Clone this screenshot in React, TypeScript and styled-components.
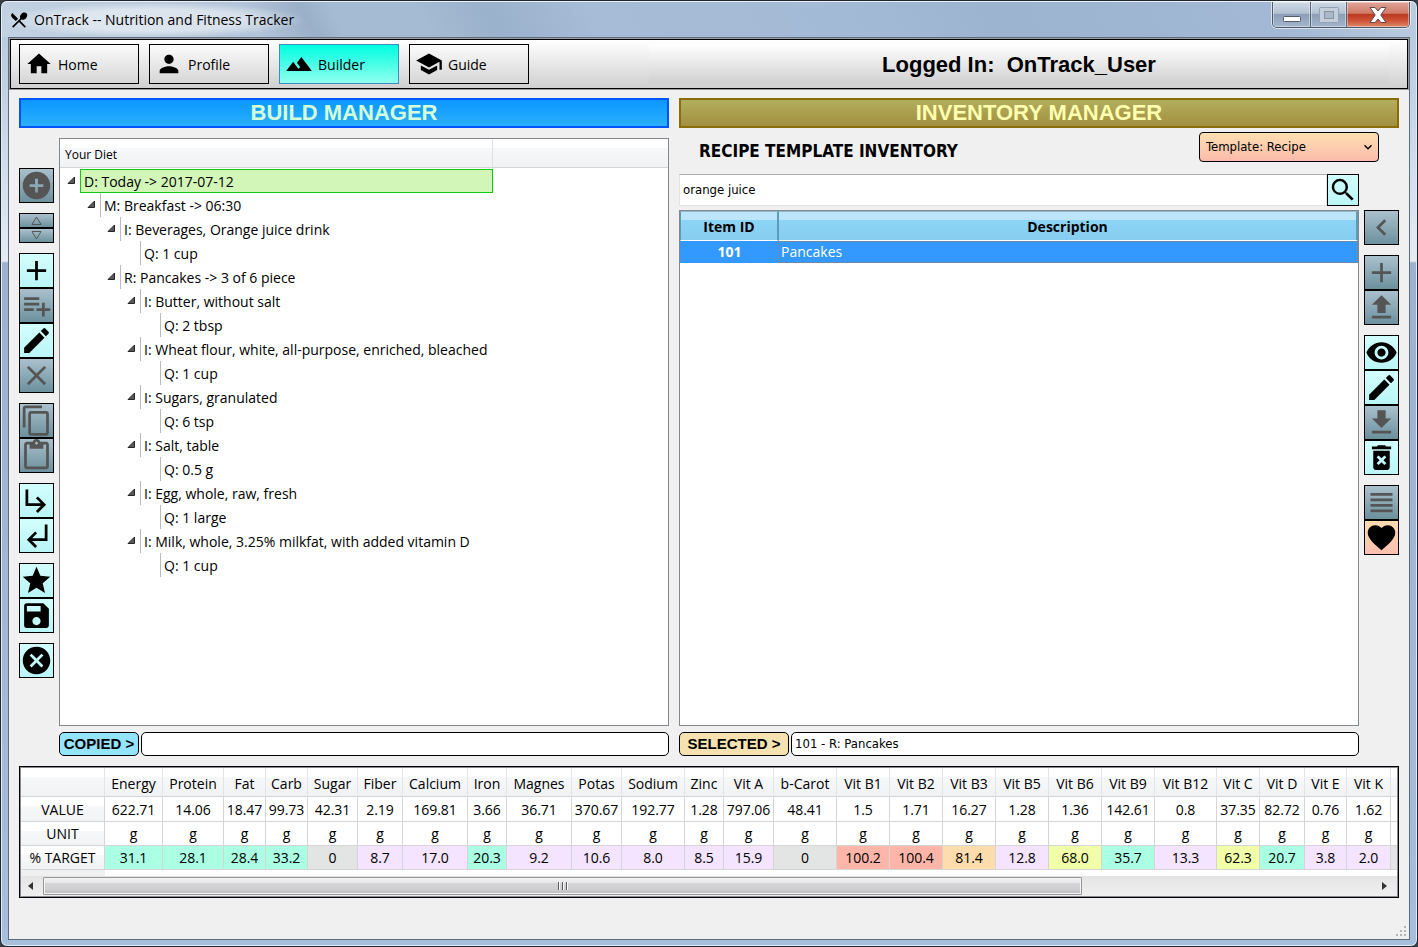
import React from "react";
import styled, { createGlobalStyle, css } from "styled-components";
import {
  MdAdd,
  MdAddCircle,
  MdCancel,
  MdChevronLeft,
  MdClose,
  MdContentCopy,
  MdContentPaste,
  MdDeleteForever,
  MdDownload,
  MdEdit,
  MdExpandMore,
  MdFavorite,
  MdHome,
  MdPerson,
  MdPlaylistAdd,
  MdRestaurantMenu,
  MdSave,
  MdSchool,
  MdSearch,
  MdStar,
  MdSubdirectoryArrowLeft,
  MdSubdirectoryArrowRight,
  MdTerrain,
  MdUpload,
  MdViewHeadline,
  MdVisibility,
} from "react-icons/md";

const uiFont = `"Open Sans", "Noto Sans", sans-serif`;
const formFont = `"DejaVu Sans Condensed", "DejaVu Sans", sans-serif`;
const headingFont = `"Liberation Sans", Arial, sans-serif`;

const GlobalStyle = createGlobalStyle`
  *, *::before, *::after { box-sizing: border-box; }
  body { margin: 0; background: #3a3f46; font: 14px/24px ${uiFont}; color: #000; }
  button, input, select { font: inherit; color: inherit; margin: 0; }
  svg { display: block; flex: none; }
`;

const Window = styled.div`
  min-height: 100vh;
  display: flex;
  flex-direction: column;
  padding: 0 7px 6px;
  border: 1px solid #20262e;
  border-radius: 7px;
  box-shadow: inset 0 0 0 1px #e4edf6;
  background: linear-gradient(#b4c7dc 0, #c3d3e5 100px, #e3ebf5 255px, #e3ebf5 260px, #9cb2cf 262px, #a4b9d5 700px, #a5bfdc 100%);
`;

const TitleBar = styled.header`
  display: flex;
  align-items: flex-start;
  justify-content: space-between;
  height: 36px;
  margin: 0 -6px;
  padding-right: 6px;
  border-radius: 6px 6px 0 0;
  border-top: 1px solid #e9f0f8;
  background: linear-gradient(62deg, #c2d2e2 0, #b3c5d9 18%, #9aafc8 22%, #a5bad3 24%, #a5bad3 30%, #9bb2cc 35%, #a7bcd6 42%, #a3bad6 60%, #9cb4d0 70%, #a2b8d4 90%, #bccde0 100%);
`;

const Title = styled.h1`
  display: flex;
  align-items: center;
  gap: 5px;
  height: 36px;
  margin: 0;
  padding: 0 12px 0 7px;
  font-size: 14px;
  font-weight: 400;
  background: radial-gradient(closest-side, rgba(255, 255, 255, 0.5) 60%, transparent);
`;

const Caption = styled.div`
  display: flex;
  height: 26px;
  border: 1px solid #4c5a6c;
  border-top: 0;
  border-radius: 0 0 5px 5px;
  box-shadow: 0 0 0 1px rgba(255, 255, 255, 0.6);
  overflow: hidden;
`;

const CaptionButton = styled.button<{ $kind?: "close"; $w: number }>`
  display: flex;
  align-items: center;
  justify-content: center;
  width: ${(p) => p.$w}px;
  padding: 0;
  border: 0;
  border-right: 1px solid #56657a;
  box-shadow: inset 0 0 0 1px rgba(255, 255, 255, 0.4);
  background: linear-gradient(#cfd9e5 0, #b3c1d2 45%, #8d9fb6 50%, #a3b6cd 100%);
  ${(p) =>
    p.$kind === "close" &&
    css`
      border-right: 0;
      background: linear-gradient(#e0a597 0, #d07a68 45%, #bb3a22 50%, #cf5238 75%, #dd8c6c 100%);
    `}
`;

const MinimizeButton = styled(CaptionButton)`
  align-items: flex-end;
  padding-bottom: 5px;
`;

const Client = styled.main`
  flex: 1;
  display: flex;
  flex-direction: column;
  border: 1px solid #5d6c7e;
  background: #f0f0f0;
`;

const ToolBar = styled.nav`
  display: flex;
  align-items: center;
  gap: 10px;
  height: 50px;
  margin: 1px 1px 0;
  padding: 0 8px;
  border: 1px solid #000;
  box-shadow: 0 0 0 1px #9a9aa0;
  background: linear-gradient(#fff, #d0d0d0);
`;

const NavButton = styled.button<{ $active?: boolean }>`
  display: flex;
  align-items: center;
  gap: 5px;
  width: 120px;
  height: 40px;
  padding: 0 5px;
  line-height: 26px;
  border: 1px solid ${(p) => (p.$active ? "#3a8fc0" : "#000")};
  background: ${(p) => (p.$active ? "linear-gradient(#00ffe1, #90ffee)" : "linear-gradient(#fbfbfb, #d6d6d6)")};

  span {
    padding-top: 2px;
  }
`;

const LoginLabel = styled.div`
  flex: 1;
  height: 40px;
  margin: 0 10px 0 110px;
  font: bold 22px/42px ${headingFont};
  text-align: center;
  white-space: pre;
  background: linear-gradient(#fff, #d0d0d0);
`;

const Workspace = styled.div`
  flex: 1;
  display: grid;
  grid-template-columns: minmax(0, 65fr) minmax(0, 72fr);
  gap: 10px;
  padding: 9px 10px 10px;
`;

const Manager = styled.section`
  display: flex;
  flex-direction: column;
`;

const Banner = styled.h2<{ $tone: "blue" | "olive" }>`
  height: 30px;
  margin: 0;
  font: bold 22px/26px ${headingFont};
  text-align: center;
  ${(p) =>
    p.$tone === "blue"
      ? css`
          color: #d5ffd8;
          border: 2px solid #0055ff;
          background: linear-gradient(#0a98ff, #2bb0ff);
        `
      : css`
          color: #ffffb0;
          border: 2px solid #8a6c08;
          background: linear-gradient(#b2ae5e, #a2903f);
        `}
`;

const ManagerBody = styled.div`
  flex: 1;
  display: flex;
  gap: 5px;
`;

const Panel = styled.div`
  flex: 1;
  min-width: 0;
  display: flex;
  flex-direction: column;
`;

const SideTools = styled.div<{ $top: number }>`
  display: flex;
  flex-direction: column;
  gap: 10px;
  width: 35px;
  padding-top: ${(p) => p.$top}px;
`;

const ToolGroup = styled.div`
  display: flex;
  flex-direction: column;
`;

const tones = {
  on: css`
    color: #000;
    background: linear-gradient(#d2fffd, #baf5f6);
  `,
  off: css`
    color: #555;
    background: linear-gradient(#aac1cd, #6c909d);
  `,
  warm: css`
    color: #000;
    background: linear-gradient(#ffdcb0, #fabfae);
  `,
};

const ToolButton = styled.button<{ $tone: keyof typeof tones; $h?: number; $w?: number }>`
  display: flex;
  align-items: center;
  justify-content: center;
  width: ${(p) => p.$w ?? 35}px;
  height: ${(p) => p.$h ?? 35}px;
  padding: 0;
  border: 1px solid #000;
  overflow: hidden;
  ${(p) => tones[p.$tone]}
`;

const TreeBox = styled.div`
  flex: 1;
  margin-top: 10px;
  border: 1px solid #828790;
  background: #fff;
`;

const TreeHeader = styled.div`
  display: flex;
  height: 29px;
  font: 12px/32px ${uiFont};
  border-bottom: 1px solid #d5d5d5;
  background: linear-gradient(#fff 0, #fff 9px, #f7f8fa 9px, #f1f2f4 100%);
`;

const TreeHeaderCell = styled.div`
  width: 433px;
  padding-left: 5px;
  border-right: 1px solid #dfe0e2;
`;

const TreeList = styled.ul`
  margin: 0;
  padding: 1px 0 0;
  list-style: none;
`;

const TreeRow = styled.li<{ $level: number }>`
  display: flex;
  height: 24px;
  width: 433px;
  padding-left: ${(p) => p.$level * 20}px;
  white-space: nowrap;
`;

const Expander = styled.span`
  display: flex;
  flex: none;
  width: 20px;
  padding: 7px 0 0 7px;
`;

const TreeLabel = styled.span<{ $selected?: boolean }>`
  height: 24px;
  padding-left: 3px;
  line-height: 26px;
  border-left: 1px solid #b8bcc2;
  ${(p) =>
    p.$selected &&
    css`
      flex: 1;
      line-height: 24px;
      border: 1px solid #12c912;
      background: #d2f5b8;
    `}
`;

const StatusLine = styled.div`
  display: flex;
  gap: 2px;
  height: 24px;
  margin-top: 6px;
`;

const StatusTag = styled.label<{ $w: number; $bg: string }>`
  width: ${(p) => p.$w}px;
  border: 1px solid #000;
  border-radius: 5px;
  font: bold 15px/22px ${headingFont};
  text-align: center;
  white-space: nowrap;
  background: ${(p) => p.$bg};
`;

const StatusField = styled.input`
  flex: 1;
  min-width: 0;
  padding: 0 3px;
  border: 1px solid #000;
  border-radius: 5px;
  font: 13px/22px ${formFont};
  background: #fff;
`;

const InventoryHead = styled.div`
  display: flex;
  align-items: flex-start;
  justify-content: space-between;
  height: 46px;
  padding: 4px 20px 0;
`;

const InventoryTitle = styled.h3`
  margin: 0;
  font: bold 17px/38px ${formFont};
`;

const TemplatePicker = styled.div`
  position: relative;
  width: 180px;

  svg {
    position: absolute;
    right: 3px;
    top: 7px;
    pointer-events: none;
  }
`;

const TemplateSelect = styled.select`
  appearance: none;
  width: 100%;
  height: 30px;
  padding: 0 6px;
  border: 1px solid #000;
  border-radius: 4px;
  font: 13px/28px ${formFont};
  background: linear-gradient(#ffdfb0, #fcbbab);
`;

const InventoryBody = styled.div`
  flex: 1;
  display: flex;
  gap: 5px;
`;

const SearchRow = styled.form`
  display: flex;
  height: 32px;
  margin-bottom: 4px;
`;

const SearchInput = styled.input`
  flex: 1;
  min-width: 0;
  padding: 0 3px;
  border: 1px solid #e3e4ea;
  border-top-color: #abadb3;
  font: 13px/28px ${formFont};
  background: #fff;
`;

const InventoryBox = styled.div`
  flex: 1;
  border: 1px solid #828790;
  background: #fff;
`;

const InventoryTable = styled.table`
  width: 100%;
  table-layout: fixed;
  border-collapse: separate;
  border-spacing: 0;

  th {
    height: 30px;
    padding: 2px 0 0;
    font: bold 14px/26px ${uiFont};
    border-top: 1px solid #8fb8cb;
    border-right: 2px solid #5d9cb8;
    border-bottom: 1px solid #fff;
    background: linear-gradient(#bde5f9 0, #bde5f9 8px, #8dd5f7 8px, #86cdf0 100%);
  }
  th:first-child {
    width: 99px;
    border-left: 1px solid #5d9cb8;
  }
  td {
    height: 22px;
    padding: 0 1px;
    color: #fff;
    line-height: 20px;
    background: #3399ff;
    border: 1px dotted #a8795a;
  }
  td:first-child {
    border-color: #3399ff;
    font-weight: 700;
    text-align: center;
  }
`;

const NutrientBox = styled.section`
  margin: 0 10px 41px;
  border: 1px solid #000;
  box-shadow: inset 0 0 0 1px #8a8a92;
  padding: 1px;
  overflow: hidden;
`;

const NutrientScroll = styled.div`
  overflow: hidden;
  height: 108px;
  background: linear-gradient(to right, #f0f0f0 84px, #fff 84px);
`;

const NutrientTable = styled.table`
  table-layout: fixed;
  width: 1436px;
  border-collapse: separate;
  border-spacing: 0;

  th,
  td {
    height: 24px;
    padding: 0;
    font-weight: 400;
    text-align: center;
    line-height: 22px;
    white-space: nowrap;
    border-right: 1px solid #d5d5d5;
    border-bottom: 1px solid #d5d5d5;
  }
  td {
    background: #fff;
  }
  thead th {
    height: 29px;
    padding-top: 4px;
    line-height: 24px;
    border-right-color: #e3e4e6;
    background: linear-gradient(#fff 0, #fff 9px, #f7f8fa 9px, #f1f2f4 100%);
  }
  tbody th {
    padding-top: 1px;
    background: linear-gradient(#fff 0, #fff 9px, #f7f8fa 9px, #f1f2f4 100%);
  }
  tbody tr:first-child > * {
    height: 25px;
    padding-top: 2px;
  }
`;

const band = {
  none: "#e3e5e4",
  low: "#f4e4ff",
  ok: "#abffe3",
  mid: "#f0ffa8",
  high: "#ffdcab",
  over: "#ffb6a8",
};

const TargetCell = styled.td<{ $band: keyof typeof band }>`
  && {
    background: ${(p) => band[p.$band]};
  }
`;

const ScrollBar = styled.div`
  display: flex;
  align-items: flex-start;
  height: 20px;
  border-top: 1px solid #e2e2e2;
  background: linear-gradient(#e6e6e6, #efefef);
`;

const ScrollArrow = styled.button`
  display: flex;
  align-items: center;
  justify-content: center;
  width: 22px;
  height: 17px;
  padding: 0 3px 0 0;
  border: 0;
  background: none;
`;

const ScrollTrack = styled.div`
  flex: 1;
`;

const ScrollThumb = styled.div`
  display: flex;
  align-items: center;
  justify-content: center;
  width: 78%;
  height: 18px;
  border: 1px solid #979797;
  border-radius: 1px;
  box-shadow: inset 0 0 0 1px #f4f4f4;
  background: linear-gradient(#f2f2f2 0, #e6e6e8 30%, #d3d4d6 35%, #cfcfd1 70%, #bcbcbe 100%);
`;

const SizeGrip = styled.svg`
  position: absolute;
  right: 11px;
  bottom: 10px;
`;

const Frame = styled.div`
  position: relative;
`;

type Tone = keyof typeof tones;
type Tool = { name: string; tone: Tone; icon: React.ReactNode; h?: number };

const leftTools: Tool[][] = [
  [{ name: "Add day", tone: "off", icon: <MdAddCircle size={33} /> }],
  [
    {
      name: "Move up",
      tone: "off",
      h: 15,
      icon: (
        <svg width="11" height="9" viewBox="0 0 11 9" fill="none" stroke="currentColor">
          <path d="M5.5 1 10 8.5H1z" />
        </svg>
      ),
    },
    {
      name: "Move down",
      tone: "off",
      h: 15,
      icon: (
        <svg width="11" height="9" viewBox="0 0 11 9" fill="none" stroke="currentColor">
          <path d="M5.5 8 10 .5H1z" />
        </svg>
      ),
    },
  ],
  [
    { name: "Add", tone: "on", icon: <MdAdd size={33} /> },
    { name: "Add to list", tone: "off", icon: <MdPlaylistAdd size={33} /> },
    { name: "Edit", tone: "on", icon: <MdEdit size={33} /> },
    { name: "Remove", tone: "off", icon: <MdClose size={33} /> },
  ],
  [
    { name: "Copy", tone: "off", icon: <MdContentCopy size={33} /> },
    { name: "Paste", tone: "off", icon: <MdContentPaste size={33} /> },
  ],
  [
    { name: "Expand", tone: "on", icon: <MdSubdirectoryArrowRight size={33} /> },
    { name: "Collapse", tone: "on", icon: <MdSubdirectoryArrowLeft size={33} /> },
  ],
  [
    { name: "Favorite", tone: "on", icon: <MdStar size={33} /> },
    {
      name: "Save",
      tone: "on",
      icon: (
        <svg width="33" height="33" viewBox="0 0 24 24" fill="currentColor">
          <path d="M17 3H5a2 2 0 0 0-2 2v14a2 2 0 0 0 2 2h14c1.100 0 2-.9 2-2V7l-4-4zm-5 16c-1.660 0-3-1.340-3-3s1.340-3 3-3 3 1.340 3 3-1.340 3-3 3zm3-10H5V5h10v4z" />
        </svg>
      ),
    },
  ],
  [{ name: "Clear", tone: "on", icon: <MdCancel size={33} /> }],
];

const rightTools: Tool[][] = [
  [{ name: "Back", tone: "off", icon: <MdChevronLeft size={33} /> }],
  [
    { name: "Add item", tone: "off", icon: <MdAdd size={33} /> },
    { name: "Upload", tone: "off", icon: <MdUpload size={33} /> },
  ],
  [
    { name: "View", tone: "on", icon: <MdVisibility size={33} /> },
    { name: "Edit item", tone: "on", icon: <MdEdit size={33} /> },
    { name: "Download", tone: "off", icon: <MdDownload size={33} /> },
    { name: "Delete", tone: "on", icon: <MdDeleteForever size={33} /> },
  ],
  [
    { name: "List", tone: "off", icon: <MdViewHeadline size={33} /> },
    { name: "Favorites", tone: "warm", icon: <MdFavorite size={33} /> },
  ],
];

const diet: [number, string][] = [
  [0, "D: Today -> 2017-07-12"],
  [1, "M: Breakfast -> 06:30"],
  [2, "I: Beverages, Orange juice drink"],
  [3, "Q: 1 cup"],
  [2, "R: Pancakes -> 3 of 6 piece"],
  [3, "I: Butter, without salt"],
  [4, "Q: 2 tbsp"],
  [3, "I: Wheat flour, white, all-purpose, enriched, bleached"],
  [4, "Q: 1 cup"],
  [3, "I: Sugars, granulated"],
  [4, "Q: 6 tsp"],
  [3, "I: Salt, table"],
  [4, "Q: 0.5 g"],
  [3, "I: Egg, whole, raw, fresh"],
  [4, "Q: 1 large"],
  [3, "I: Milk, whole, 3.25% milkfat, with added vitamin D"],
  [4, "Q: 1 cup"],
];

const nutrients: [string, number, string, string, keyof typeof band][] = [
  ["Energy", 58, "622.71", "31.1", "ok"],
  ["Protein", 61, "14.06", "28.1", "ok"],
  ["Fat", 42, "18.47", "28.4", "ok"],
  ["Carb", 42, "99.73", "33.2", "ok"],
  ["Sugar", 50, "42.31", "0", "none"],
  ["Fiber", 45, "2.19", "8.7", "low"],
  ["Calcium", 65, "169.81", "17.0", "low"],
  ["Iron", 39, "3.66", "20.3", "ok"],
  ["Magnes", 65, "36.71", "9.2", "low"],
  ["Potas", 50, "370.67", "10.6", "low"],
  ["Sodium", 63, "192.77", "8.0", "low"],
  ["Zinc", 39, "1.28", "8.5", "low"],
  ["Vit A", 50, "797.06", "15.9", "low"],
  ["b-Carot", 63, "48.41", "0", "none"],
  ["Vit B1", 53, "1.5", "100.2", "over"],
  ["Vit B2", 53, "1.71", "100.4", "over"],
  ["Vit B3", 53, "16.27", "81.4", "high"],
  ["Vit B5", 53, "1.28", "12.8", "low"],
  ["Vit B6", 53, "1.36", "68.0", "mid"],
  ["Vit B9", 53, "142.61", "35.7", "ok"],
  ["Vit B12", 62, "0.8", "13.3", "low"],
  ["Vit C", 43, "37.35", "62.3", "mid"],
  ["Vit D", 45, "82.72", "20.7", "ok"],
  ["Vit E", 42, "0.76", "3.8", "low"],
  ["Vit K", 44, "1.62", "2.0", "low"],
  ["", 66, "", "", "none"],
];

function Tools({ groups, top }: { groups: Tool[][]; top: number }) {
  return (
    <SideTools $top={top}>
      {groups.map((group, i) => (
        <ToolGroup key={i}>
          {group.map((t) => (
            <ToolButton key={t.name} type="button" aria-label={t.name} $tone={t.tone} $h={t.h} disabled={t.tone === "off"}>
              {t.icon}
            </ToolButton>
          ))}
        </ToolGroup>
      ))}
    </SideTools>
  );
}

function BuildManager() {
  return (
    <Manager>
      <Banner $tone="blue">BUILD MANAGER</Banner>
      <ManagerBody>
        <Tools groups={leftTools} top={40} />
        <Panel>
          <TreeBox>
            <TreeHeader>
              <TreeHeaderCell>Your Diet</TreeHeaderCell>
            </TreeHeader>
            <TreeList>
              {diet.map(([level, text], i) => (
                <TreeRow key={i} $level={level}>
                  <Expander>
                    {!text.startsWith("Q") && (
                      <svg width="9" height="9" viewBox="0 0 9 9">
                        <path d="M7.5 1v6.500H1z" fill="#595959" stroke="#262626" />
                      </svg>
                    )}
                  </Expander>
                  <TreeLabel $selected={i === 0}>{text}</TreeLabel>
                </TreeRow>
              ))}
            </TreeList>
          </TreeBox>
          <StatusLine>
            <StatusTag htmlFor="copied" $w={80} $bg="#94e3ff">
              COPIED &gt;
            </StatusTag>
            <StatusField id="copied" readOnly value="" />
          </StatusLine>
        </Panel>
      </ManagerBody>
    </Manager>
  );
}

function InventoryManager() {
  return (
    <Manager>
      <Banner $tone="olive">INVENTORY MANAGER</Banner>
      <InventoryHead>
        <InventoryTitle>RECIPE TEMPLATE INVENTORY</InventoryTitle>
        <TemplatePicker>
          <TemplateSelect aria-label="Template" defaultValue="recipe">
            <option value="recipe">Template: Recipe</option>
          </TemplateSelect>
          <MdExpandMore size={16} />
        </TemplatePicker>
      </InventoryHead>
      <InventoryBody>
        <Panel>
          <SearchRow onSubmit={(e) => e.preventDefault()}>
            <SearchInput aria-label="Search inventory" defaultValue="orange juice" />
            <ToolButton type="submit" aria-label="Search" $tone="on" $w={32} $h={32}>
              <MdSearch size={30} />
            </ToolButton>
          </SearchRow>
          <InventoryBox>
            <InventoryTable>
              <thead>
                <tr>
                  <th>Item ID</th>
                  <th>Description</th>
                </tr>
              </thead>
              <tbody>
                <tr>
                  <td>101</td>
                  <td>Pancakes</td>
                </tr>
              </tbody>
            </InventoryTable>
          </InventoryBox>
          <StatusLine>
            <StatusTag htmlFor="selected" $w={110} $bg="#f5e2b0">
              SELECTED &gt;
            </StatusTag>
            <StatusField id="selected" readOnly value="101 - R: Pancakes" />
          </StatusLine>
        </Panel>
        <Tools groups={rightTools} top={36} />
      </InventoryBody>
    </Manager>
  );
}

function Nutrients() {
  return (
    <NutrientBox>
      <NutrientScroll>
        <NutrientTable>
          <colgroup>
            <col style={{ width: 84 }} />
            {nutrients.map(([name, width]) => (
              <col key={name} style={{ width }} />
            ))}
          </colgroup>
          <thead>
            <tr>
              <th />
              {nutrients.map(([name]) => (
                <th key={name}>{name}</th>
              ))}
            </tr>
          </thead>
          <tbody>
            <tr>
              <th>VALUE</th>
              {nutrients.map(([name, , value]) => (
                <td key={name}>{value}</td>
              ))}
            </tr>
            <tr>
              <th>UNIT</th>
              {nutrients.map(([name]) => (
                <td key={name}>{name && "g"}</td>
              ))}
            </tr>
            <tr>
              <th>% TARGET</th>
              {nutrients.map(([name, , , target, level]) => (
                <TargetCell key={name} $band={level}>
                  {target}
                </TargetCell>
              ))}
            </tr>
          </tbody>
        </NutrientTable>
      </NutrientScroll>
      <ScrollBar>
        <ScrollArrow type="button" aria-label="Scroll left">
          <svg width="5" height="8" viewBox="0 0 5 8">
            <path d="M5 0v8L0 4z" fill="#333" />
          </svg>
        </ScrollArrow>
        <ScrollTrack>
          <ScrollThumb>
            <svg width="11" height="8" viewBox="0 0 11 8">
              <path d="M1.500 0v8M5.500 0v8M9.500 0v8" stroke="#5a5a5a" />
              <path d="M2.500 0v8M6.500 0v8M10.500 0v8" stroke="#fafafa" />
            </svg>
          </ScrollThumb>
        </ScrollTrack>
        <ScrollArrow type="button" aria-label="Scroll right">
          <svg width="5" height="8" viewBox="0 0 5 8">
            <path d="M0 0v8L5 4z" fill="#333" />
          </svg>
        </ScrollArrow>
      </ScrollBar>
    </NutrientBox>
  );
}

export default function App() {
  return (
    <Frame>
      <GlobalStyle />
      <Window>
        <TitleBar>
          <Title>
            <MdRestaurantMenu size={20} />
            OnTrack -- Nutrition and Fitness Tracker
          </Title>
          <Caption>
            <MinimizeButton type="button" aria-label="Minimize" $w={38}>
              <svg width="18" height="6" viewBox="0 0 18 6">
                <rect x=".5" y=".5" width="17" height="5" rx="1" fill="#fff" stroke="#505a68" />
              </svg>
            </MinimizeButton>
            <CaptionButton type="button" aria-label="Maximize" $w={36}>
              <svg width="20" height="16" viewBox="0 0 20 16">
                <rect x=".5" y=".5" width="19" height="15" rx="1" fill="#c5cfdb" stroke="#93a1b1" />
                <rect x="5.500" y="4.500" width="9" height="7" fill="#aab8c8" stroke="#8493a5" />
              </svg>
            </CaptionButton>
            <CaptionButton type="button" aria-label="Close" $kind="close" $w={62}>
              <svg width="18" height="16" viewBox="0 0 18 16">
                <path
                  d="M1 .5h5L9 4l3-3.500h5L11.800 8l5.200 7.500h-5L9 12l-3 3.500H1L6.200 8z"
                  fill="#fff"
                  stroke="#5a4a52"
                />
              </svg>
            </CaptionButton>
          </Caption>
        </TitleBar>
        <Client>
          <ToolBar>
            <NavButton type="button">
              <MdHome size={28} />
              <span>Home</span>
            </NavButton>
            <NavButton type="button">
              <MdPerson size={28} />
              <span>Profile</span>
            </NavButton>
            <NavButton type="button" $active>
              <MdTerrain size={28} />
              <span>Builder</span>
            </NavButton>
            <NavButton type="button">
              <MdSchool size={28} />
              <span>Guide</span>
            </NavButton>
            <LoginLabel>{"Logged In:  OnTrack_User"}</LoginLabel>
          </ToolBar>
          <Workspace>
            <BuildManager />
            <InventoryManager />
          </Workspace>
          <Nutrients />
        </Client>
      </Window>
      <SizeGrip width="11" height="11" viewBox="0 0 11 11" fill="#b4b4b4">
        <path d="M8 0h2v2H8zM4 4h2v2H4zM8 4h2v2H8zM0 8h2v2H0zM4 8h2v2H4zM8 8h2v2H8z" />
      </SizeGrip>
    </Frame>
  );
}
